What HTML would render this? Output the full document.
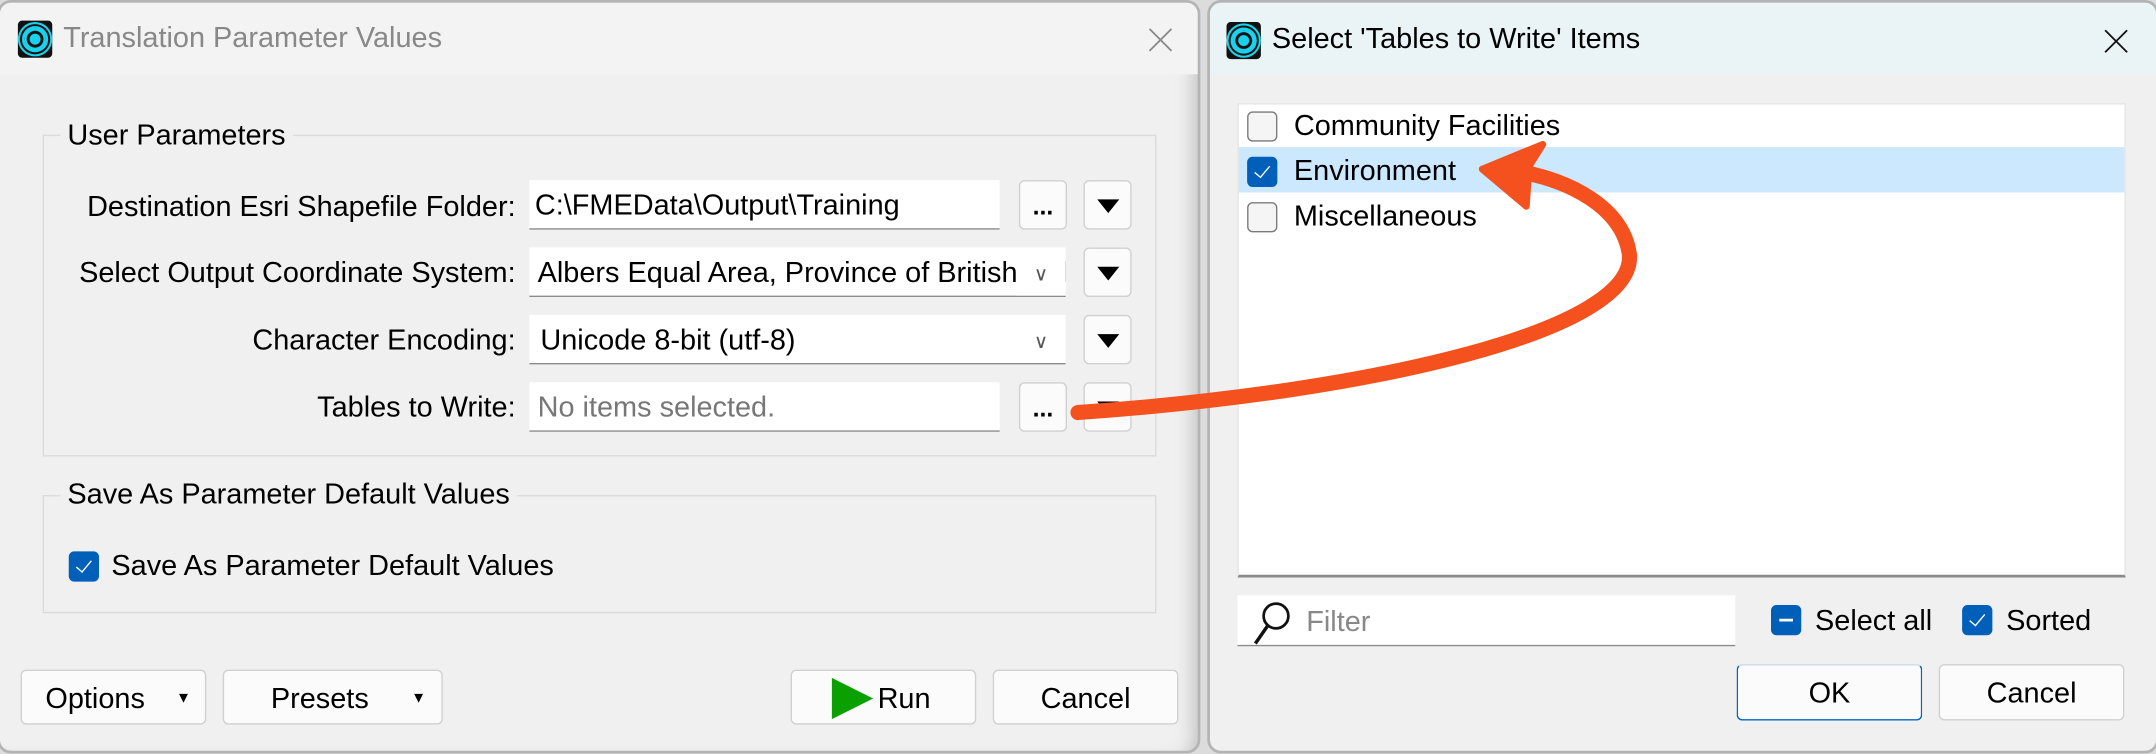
<!DOCTYPE html>
<html><head><meta charset="utf-8"><style>
*{box-sizing:border-box;margin:0;padding:0}
html,body{width:2156px;height:745px;overflow:hidden;background:#dcdcdc}
#w{position:absolute;left:0;top:0;width:1568px;height:542px;transform:scale(1.375);transform-origin:0 0;font-family:"Liberation Sans",sans-serif;font-size:21px;color:#000}
.a{position:absolute}
.dlg{position:absolute;background:#f0f0f0;border:2px solid #b4b4b4;border-radius:10px;overflow:hidden}
.fld{position:absolute;background:#fff;border-bottom:1px solid #8a8a8a;height:36px;line-height:38px;padding-left:6px;white-space:nowrap;overflow:hidden}
.btn{position:absolute;background:#fbfbfb;border:1px solid #d0d0d0;border-radius:4px;text-align:center}
.lbl{position:absolute;right:1193px;text-align:right;white-space:nowrap}
.tri{width:0;height:0;border-left:8px solid transparent;border-right:8px solid transparent;border-top:10px solid #000;position:absolute;left:9px;top:13px}
.cb{position:absolute;width:22px;height:22px;border-radius:4px;border:1px solid #7a7a7a;background:#f5f5f5}
.cb.on{background:#005fb8;border-color:#005fb8}
.cb.on:after{content:"";position:absolute;left:7px;top:3px;width:5px;height:10px;border:solid #fff;border-width:0 1.5px 1.5px 0;transform:rotate(40deg)}
.cb.mid{background:#005fb8;border-color:#005fb8}
.grp{position:absolute;border:1px solid #dadada}
.icon{position:absolute;width:25px;height:27px;background:#111;border-radius:3px}
.icon:after{content:"";position:absolute;left:3px;top:4px;width:15px;height:15px;border-radius:50%;border:2px solid #19d3ee;box-shadow:0 0 0 1.5px #111,0 0 0 3px #19d3ee;background:radial-gradient(circle,#19d3ee 35%,#111 40%,#111 55%,#19d3ee 60%)}
</style></head><body><div id="w">
<div class="dlg" style="left:-2px;top:0;width:875px;height:548px;box-shadow:inset -12px 0 14px -10px #bbb">
 <div class="a" style="left:0;top:0;width:875px;height:52px;background:#f3f3f3"></div>
 <div class="icon" style="left:13px;top:13px"></div>
 <div class="a" style="left:46px;top:14px;color:#888;font-size:21px">Translation Parameter Values</div>
 <svg class="a" style="left:835px;top:18px" width="18" height="18"><path d="M1 1L17 17M17 1L1 17" stroke="#888" stroke-width="1.3"/></svg>
</div>
<div class="grp" style="left:31px;top:98px;width:810px;height:234px"></div>
<div class="a" style="left:44px;top:87px;background:#f0f0f0;padding:0 5px">User Parameters</div>
<div class="lbl" style="top:139px">Destination Esri Shapefile Folder:</div>
<div class="lbl" style="top:187px">Select Output Coordinate System:</div>
<div class="lbl" style="top:236px">Character Encoding:</div>
<div class="lbl" style="top:285px">Tables to Write:</div>
<div class="fld" style="left:385px;top:131px;width:342px;padding-left:4px">C:\FMEData\Output\Training</div>
<div class="fld" style="left:385px;top:180px;width:390px;padding-right:40px">Albers Equal Area, Province of British Columbia<span class="a" style="right:0;top:0;width:36px;background:#fff;color:#555;text-align:center;font-size:14px">∨</span></div>
<div class="fld" style="left:385px;top:229px;width:390px;padding-left:8px">Unicode 8-bit (utf-8)<span class="a" style="right:0;top:0;width:36px;background:#fff;color:#555;text-align:center;font-size:14px">∨</span></div>
<div class="fld" style="left:385px;top:278px;width:342px;color:#777">No items selected.</div>
<div class="btn" style="left:741px;top:131px;width:35px;height:36px;font-weight:bold;line-height:36px;font-size:18px">...</div>
<div class="btn" style="left:741px;top:278px;width:35px;height:36px;font-weight:bold;line-height:36px;font-size:18px">...</div>
<div class="btn" style="left:788px;top:131px;width:35px;height:36px"><div class="tri"></div></div>
<div class="btn" style="left:788px;top:180px;width:35px;height:36px"><div class="tri"></div></div>
<div class="btn" style="left:788px;top:229px;width:35px;height:36px"><div class="tri"></div></div>
<div class="btn" style="left:788px;top:278px;width:35px;height:36px"><div class="tri"></div></div>
<div class="grp" style="left:31px;top:360px;width:810px;height:86px"></div>
<div class="a" style="left:44px;top:348px;background:#f0f0f0;padding:0 5px">Save As Parameter Default Values</div>
<div class="cb on" style="left:50px;top:401px"></div>
<div class="a" style="left:81px;top:400px">Save As Parameter Default Values</div>
<div class="btn" style="left:15px;top:487px;width:135px;height:40px;line-height:42px;text-align:left;padding-left:17px">Options<span class="a" style="left:112px;top:0;font-size:11px;line-height:40px">▼</span></div>
<div class="btn" style="left:162px;top:487px;width:160px;height:40px;line-height:42px;text-align:left;padding-left:34px">Presets<span class="a" style="left:136px;top:0;font-size:11px;line-height:40px">▼</span></div>
<div class="btn" style="left:575px;top:487px;width:135px;height:40px;line-height:42px;padding-left:30px">Run<span class="a" style="left:29px;top:5px;width:0;height:0;border-top:15px solid transparent;border-bottom:15px solid transparent;border-left:30px solid #0aa000"></span></div>
<div class="btn" style="left:722px;top:487px;width:135px;height:40px;line-height:42px">Cancel</div>

<div class="dlg" style="left:878px;top:0;width:692px;height:548px">
 <div class="a" style="left:0;top:0;width:692px;height:52px;background:#eaf4f7"></div>
 <div class="icon" style="left:12px;top:14px"></div>
 <div class="a" style="left:45px;top:15px;font-size:21px">Select 'Tables to Write' Items</div>
 <svg class="a" style="left:650px;top:19px" width="18" height="18"><path d="M1 1L17 17M17 1L1 17" stroke="#111" stroke-width="1.3"/></svg>
</div>
<div class="a" style="left:900px;top:75px;width:646px;height:345px;background:#fff;border:1px solid #e4e4e4;border-bottom:2px solid #8a8a8a"></div>
<div class="a" style="left:901px;top:107px;width:644px;height:33px;background:#cce8ff"></div>
<div class="cb" style="left:907px;top:81px"></div><div class="a" style="left:941px;top:80px">Community Facilities</div>
<div class="cb on" style="left:907px;top:114px"></div><div class="a" style="left:941px;top:113px">Environment</div>
<div class="cb" style="left:907px;top:147px"></div><div class="a" style="left:941px;top:146px">Miscellaneous</div>
<div class="fld" style="left:900px;top:433px;width:362px;height:37px;line-height:40px;padding-left:50px;color:#888">Filter</div>
<svg class="a" style="left:906px;top:436px" width="40" height="36"><circle cx="22" cy="12" r="9" fill="none" stroke="#111" stroke-width="2"/><path d="M16 19 L7 32" stroke="#111" stroke-width="2.5"/></svg>
<div class="cb mid" style="left:1288px;top:440px"></div>
<div class="a" style="left:1294px;top:450px;width:10px;height:2px;background:#fff"></div>
<div class="a" style="left:1320px;top:440px">Select all</div>
<div class="cb on" style="left:1427px;top:440px"></div>
<div class="a" style="left:1459px;top:440px">Sorted</div>
<div class="btn" style="left:1263px;top:483px;width:135px;height:41px;line-height:42px;border-color:#0067c0;border-top-color:#c8d8e8">OK</div>
<div class="btn" style="left:1410px;top:483px;width:135px;height:41px;line-height:42px">Cancel</div>

<svg class="a" style="left:0;top:0" width="1568" height="542">
<path d="M784 300 C 1000 285, 1190 240, 1185 185 C 1180 150, 1140 130, 1100 124" fill="none" stroke="#f4511e" stroke-width="11" stroke-linecap="round"/>
<path d="M1078 123 L1122 105 L1112 121 L1110 150 Z" fill="#f4511e" stroke="#f4511e" stroke-width="5" stroke-linejoin="round"/>
</svg>
</div></body></html>
